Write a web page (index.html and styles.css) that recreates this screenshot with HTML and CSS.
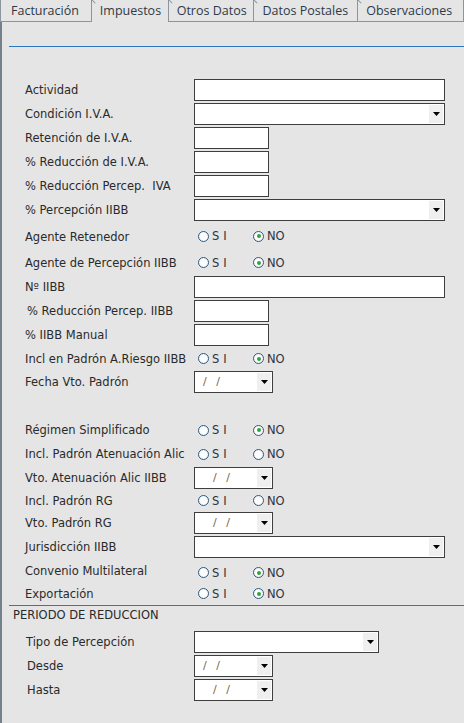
FILE: index.html
```html
<!DOCTYPE html>
<html lang="es">
<head>
    <meta charset="UTF-8">
    <title>Impuestos</title>
    <link rel="stylesheet" href="styles.css">
</head>
<body>
    <div class="tabs">
        <div class="tab tab-first">Facturación</div>
        <div class="tab active">Impuestos</div>
        <div class="tab">Otros Datos</div>
        <div class="tab">Datos Postales</div>
        <div class="tab">Observaciones</div>
    </div>

    <div class="panel">
        <div class="rule rule-top"></div>

        <div class="form">
            <div class="row"><span class="label">Actividad</span><div class="field wide"></div></div>
            <div class="row"><span class="label">Condición I.V.A.</span><div class="field wide select"><span class="drop"><svg width="7" height="4" viewBox="0 0 7 4"><polygon points="0,0 7,0 3.5,4"/></svg></span></div></div>
            <div class="row"><span class="label">Retención de I.V.A.</span><div class="field small"></div></div>
            <div class="row"><span class="label">% Reducción de I.V.A.</span><div class="field small"></div></div>
            <div class="row"><span class="label">% Reducción Percep.&nbsp; IVA</span><div class="field small"></div></div>
            <div class="row"><span class="label">% Percepción IIBB</span><div class="field wide select"><span class="drop"><svg width="7" height="4" viewBox="0 0 7 4"><polygon points="0,0 7,0 3.5,4"/></svg></span></div></div>

            <div class="row r28"><span class="label">Agente Retenedor</span>
                <div class="radios"><span class="opt"><i class="dot"></i><span class="si">SI</span></span><span class="opt"><i class="dot on"></i>NO</span></div></div>
            <div class="row r25"><span class="label">Agente de Percepción IIBB</span>
                <div class="radios"><span class="opt"><i class="dot"></i><span class="si">SI</span></span><span class="opt"><i class="dot on"></i>NO</span></div></div>
            <div class="row"><span class="label">Nº IIBB</span><div class="field wide"></div></div>
            <div class="row"><span class="label indent">% Reducción Percep. IIBB</span><div class="field small"></div></div>
            <div class="row"><span class="label">% IIBB Manual</span><div class="field small"></div></div>
            <div class="row r23"><span class="label">Incl en Padrón A.Riesgo IIBB</span>
                <div class="radios"><span class="opt"><i class="dot"></i><span class="si">SI</span></span><span class="opt"><i class="dot on"></i>NO</span></div></div>
            <div class="row"><span class="label">Fecha Vto. Padrón</span>
                <div class="field date"><span class="mask">/ /</span><span class="drop"><svg width="7" height="4" viewBox="0 0 7 4"><polygon points="0,0 7,0 3.5,4"/></svg></span></div></div>

            <div class="spacer"></div>

            <div class="row"><span class="label">Régimen Simplificado</span>
                <div class="radios"><span class="opt"><i class="dot"></i><span class="si">SI</span></span><span class="opt"><i class="dot on"></i>NO</span></div></div>
            <div class="row"><span class="label">Incl. Padrón Atenuación Alic</span>
                <div class="radios"><span class="opt"><i class="dot"></i><span class="si">SI</span></span><span class="opt"><i class="dot"></i>NO</span></div></div>
            <div class="row"><span class="label">Vto. Atenuación Alic IIBB</span>
                <div class="field date"><span class="mask shift">/ /</span><span class="drop"><svg width="7" height="4" viewBox="0 0 7 4"><polygon points="0,0 7,0 3.5,4"/></svg></span></div></div>
            <div class="row r21"><span class="label">Incl. Padrón RG</span>
                <div class="radios"><span class="opt"><i class="dot"></i><span class="si">SI</span></span><span class="opt"><i class="dot"></i>NO</span></div></div>
            <div class="row"><span class="label">Vto. Padrón RG</span>
                <div class="field date"><span class="mask shift">/ /</span><span class="drop"><svg width="7" height="4" viewBox="0 0 7 4"><polygon points="0,0 7,0 3.5,4"/></svg></span></div></div>
            <div class="row"><span class="label">Jurisdicción IIBB</span><div class="field wide select"><span class="drop"><svg width="7" height="4" viewBox="0 0 7 4"><polygon points="0,0 7,0 3.5,4"/></svg></span></div></div>
            <div class="row r23"><span class="label">Convenio Multilateral</span>
                <div class="radios low"><span class="opt"><i class="dot"></i><span class="si">SI</span></span><span class="opt"><i class="dot on"></i>NO</span></div></div>
            <div class="row r23"><span class="label">Exportación</span>
                <div class="radios"><span class="opt"><i class="dot"></i><span class="si">SI</span></span><span class="opt"><i class="dot on"></i>NO</span></div></div>
        </div>

        <div class="rule"></div>
        <div class="section-title">PERIODO DE REDUCCION</div>

        <div class="form">
            <div class="row"><span class="label indent-1">Tipo de Percepción</span><div class="field medium select"><span class="drop"><svg width="7" height="4" viewBox="0 0 7 4"><polygon points="0,0 7,0 3.5,4"/></svg></span></div></div>
            <div class="row"><span class="label indent">Desde</span>
                <div class="field date"><span class="mask">/ /</span><span class="drop"><svg width="7" height="4" viewBox="0 0 7 4"><polygon points="0,0 7,0 3.5,4"/></svg></span></div></div>
            <div class="row"><span class="label indent">Hasta</span>
                <div class="field date"><span class="mask shift">/ /</span><span class="drop"><svg width="7" height="4" viewBox="0 0 7 4"><polygon points="0,0 7,0 3.5,4"/></svg></span></div></div>
        </div>
    </div>
</body>
</html>
```

FILE: styles.css
```css
body {
    margin: 0;
    background-color: #e5e5e5;
    font-family: "DejaVu Sans", Verdana, sans-serif;
    font-size: 11.5px;
    color: #2a2a2a;
    overflow: hidden;
}

/* tab strip */
.tabs {
    display: flex;
    height: 22px;
}
.tab {
    position: relative;
    box-sizing: border-box;
    height: 22px;
    padding-left: 8px;
    border-right: 1px solid #8a959e;
    border-bottom: 1px solid #8a959e;
    font-family: "Open Sans", sans-serif;
    font-size: 12.5px;
    line-height: 22px;
    color: #2f3a47;
    white-space: nowrap;
}
.tab::after {
    content: "";
    position: absolute;
    top: -1px;
    right: -3px;
    width: 1px;
    height: 5px;
    background: #8a959e;
    transform: rotate(-45deg);
}
.tab:nth-child(1) { width: 92px; }
.tab:nth-child(2) { width: 77px; }
.tab:nth-child(3) { width: 86px; }
.tab:nth-child(4) { width: 104px; }
.tab:nth-child(5) { width: 106px; }
.tab-first {
    border-left: 1px solid #8a959e;
    padding-left: 10px;
}
.tab.active {
    border-bottom: none;
}

/* panel */
.panel {
    border-left: 2px solid #74818c;
    height: 701px;
    padding-top: 24px;
    box-sizing: border-box;
}
.rule {
    height: 1px;
    margin-left: 7px;
    background-color: #2a78bd;
}
.rule-top {
    margin-bottom: 31px;
}
.form {
    padding-left: 23px;
}
.row {
    display: grid;
    grid-template-columns: 169px auto;
    align-items: center;
    height: 24px;
}
.r28 { height: 28px; }
.r25 { height: 25px; }
.r23 { height: 23px; }
.r21 { height: 21px; }
.spacer {
    height: 24px;
}
.label {
    white-space: nowrap;
}
.r28 .label, .r25 .label {
    padding-top: 1px;
}
.indent { padding-left: 2px; }
.indent-1 { padding-left: 1px; }

.section-title {
    height: 24px;
    line-height: 18px;
    padding-left: 11px;
}

/* inputs */
.field {
    box-sizing: border-box;
    height: 22px;
    border: 1px solid #3e3e3e;
    background-color: #fff;
}
.wide { width: 251px; }
.medium { width: 185px; }
.small { width: 75px; }
.date { width: 79px; }

.select, .date {
    display: flex;
    align-items: stretch;
    justify-content: flex-end;
    padding: 1px;
}
.drop {
    width: 14px;
    background-color: #efefef;
    display: flex;
    align-items: center;
    justify-content: center;
}
.drop svg {
    fill: #000;
}
.mask {
    flex: 1;
    padding-left: 7px;
    line-height: 18px;
    word-spacing: 6px;
    color: #7a5f45;
    font-size: 11px;
}
.mask.shift {
    padding-left: 17px;
}

/* radio groups */
.radios {
    display: flex;
    padding-left: 4px;
    color: #2b3440;
}
.radios.low {
    padding-top: 4px;
}
.opt {
    display: flex;
    align-items: center;
    width: 55px;
}
.dot {
    box-sizing: border-box;
    width: 11px;
    height: 11px;
    margin-right: 3px;
    border: 1px solid #2e5a84;
    border-radius: 50%;
    background: radial-gradient(circle, #fff 40%, #e8ecef 100%);
    display: flex;
    align-items: center;
    justify-content: center;
}
.dot.on::after {
    content: "";
    width: 4px;
    height: 4px;
    border-radius: 50%;
    background-color: #2fa63a;
}
.si {
    letter-spacing: 4px;
}
```
